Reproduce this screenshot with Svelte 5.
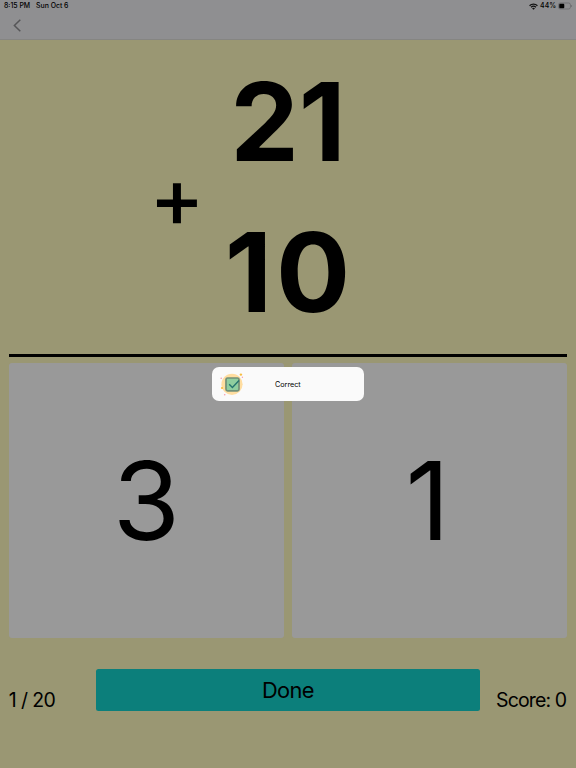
<script>
  let question = 1;
  let total = 20;
  let score = 0;
  let operands = [21, 10];
  let digits = [3, 1];
  let message = "Correct";
</script>

<div class="screen">
  <header>
    <div class="status-bar">
      <div class="status-group">
        <span class="time">8:15 PM</span>
        <span class="date">Sun Oct 6</span>
      </div>
      <div class="status-group right">
        <svg class="wifi" viewBox="0 0 16 12" fill="none" stroke="#111" stroke-width="2.3">
          <path d="M1 4.6a9.9 9.9 0 0 1 14 0" />
          <path d="M3.7 7.4a6.1 6.1 0 0 1 8.6 0" />
          <path d="M8 11.8 5.5 9.4a3.5 3.5 0 0 1 5 0z" fill="#111" stroke="none" />
        </svg>
        <span class="percent">44%</span>
        <svg class="battery" viewBox="0 0 15 8">
          <rect x="0.5" y="0.9" width="12.4" height="6.2" rx="1.9" fill="none" stroke="#646466" stroke-width="0.7" />
          <rect x="1.3" y="1.7" width="5.2" height="4.6" rx="0.9" fill="#000" />
          <path d="M13.8 2.9q.8.2.8 1.1t-.8 1.1z" fill="#646466" />
        </svg>
      </div>
    </div>
    <nav>
      <button class="back" aria-label="Back">
        <svg viewBox="0 0 8 13" fill="none" stroke="#555557" stroke-width="1.5">
          <path d="M7.3 .8 1.4 6.5l5.9 5.7" />
        </svg>
      </button>
    </nav>
  </header>

  <main>
    <div class="problem">
      <div class="operand">{operands[0]}</div>
      <div class="operator">+</div>
      <div class="operand second">{operands[1]}</div>
    </div>
    <div class="rule"></div>

    <div class="cards">
      {#each digits as digit}
        <div class="card"><span>{digit}</span></div>
      {/each}
    </div>

    <footer>
      <span class="label">{question} / {total}</span>
      <button class="done">Done</button>
      <span class="label score">Score: {score}</span>
    </footer>
  </main>

  <div class="toast">
    <svg viewBox="0 0 26 26">
      <circle cx="13" cy="13.3" r="10.6" fill="#ffdda0" />
      <rect x="7" y="7" width="13" height="12.8" rx="1.6" fill="#8fce9f" stroke="#719078" stroke-width="1.7" />
      <path d="m10.2 13.3 3.2 3.2 6.6-7" fill="none" stroke="#25746f" stroke-width="1.4" />
      <circle cx="21.9" cy="3.6" r="1.2" fill="#f8bd3f" />
      <circle cx="3" cy="17" r="1.1" fill="#f8bd3f" />
      <circle cx="2.2" cy="7.3" r="0.8" fill="#f69aac" />
      <circle cx="23.4" cy="6.2" r="0.7" fill="#f69aac" />
      <circle cx="5.7" cy="23.8" r="0.8" fill="#f69aac" />
    </svg>
    <span>{message}</span>
  </div>
</div>

<style>
  :global(body) {
    margin: 0;
  }

  .screen {
    position: relative;
    display: flex;
    flex-direction: column;
    width: 576px;
    height: 768px;
    overflow: hidden;
    background: #9a9773;
    color: #000;
    font-family: Inter, "Liberation Sans", sans-serif;
  }

  button {
    padding: 0;
    border: 0;
    color: inherit;
    font-family: inherit;
  }

  header {
    box-sizing: border-box;
    height: 40px;
    background: #8f8f91;
    border-bottom: 1px solid #858582;
  }

  .status-bar {
    display: flex;
    justify-content: space-between;
    height: 12px;
    padding: 0 3.5px 0 4px;
    font-size: 6.9px;
    font-weight: 500;
    line-height: 12px;
  }

  .status-group {
    display: flex;
    align-items: center;
    gap: 6px;
  }

  .right {
    gap: 2px;
  }

  .wifi {
    width: 9px;
    height: 7px;
  }

  .battery {
    width: 14.5px;
    height: 8px;
  }

  nav {
    display: flex;
    align-items: center;
    height: 27px;
    padding-left: 13px;
  }

  .back {
    display: flex;
    background: none;
  }

  .back svg {
    width: 8px;
    height: 13px;
  }

  main {
    flex: 1;
    padding: 5.5px 8.7px 0;
  }

  .problem {
    display: flex;
    flex-direction: column;
  }

  .operand {
    font-size: 109px;
    font-weight: 700;
    line-height: 151.6px;
    text-align: center;
  }

  .second {
    font-size: 110px;
    letter-spacing: 4px;
    padding-left: 3px;
  }

  /* sits on the seam between the two operands */
  .operator {
    height: 0;
    padding-left: 140.5px;
    font-size: 83px;
    font-weight: 500;
    line-height: 0;
  }

  .rule {
    height: 3.5px;
    margin-top: 5.2px;
    background: #000;
  }

  .cards {
    display: grid;
    grid-template-columns: 1fr 1fr;
    gap: 8px;
    margin-top: 5.5px;
  }

  .card {
    height: 275px;
    border-radius: 3px;
    background: #999;
    font-size: 109px;
    line-height: 275px;
    text-align: center;
  }

  .card:last-child span {
    margin-right: 4px;
  }

  footer {
    display: grid;
    grid-template-columns: 87.3px 384px 1fr;
    margin-top: 31px;
  }

  .done {
    height: 42px;
    border-radius: 2.5px;
    background: #0c7f7b;
    font-size: 21.8px;
    letter-spacing: -0.6px;
    line-height: 42px;
  }

  .label {
    padding-top: 19px;
    font-size: 19.5px;
    letter-spacing: -0.6px;
    line-height: 24px;
    white-space: nowrap;
  }

  .score {
    justify-self: end;
    padding-right: 1px;
    letter-spacing: -0.85px;
  }

  .toast {
    position: absolute;
    top: 367px;
    left: 212px;
    display: flex;
    align-items: center;
    width: 152px;
    height: 34px;
    border-radius: 7px;
    background: #fafafa;
  }

  .toast svg {
    width: 26px;
    height: 26px;
    margin-left: 7px;
  }

  .toast span {
    margin-left: 30px;
    font-size: 7.2px;
  }
</style>
